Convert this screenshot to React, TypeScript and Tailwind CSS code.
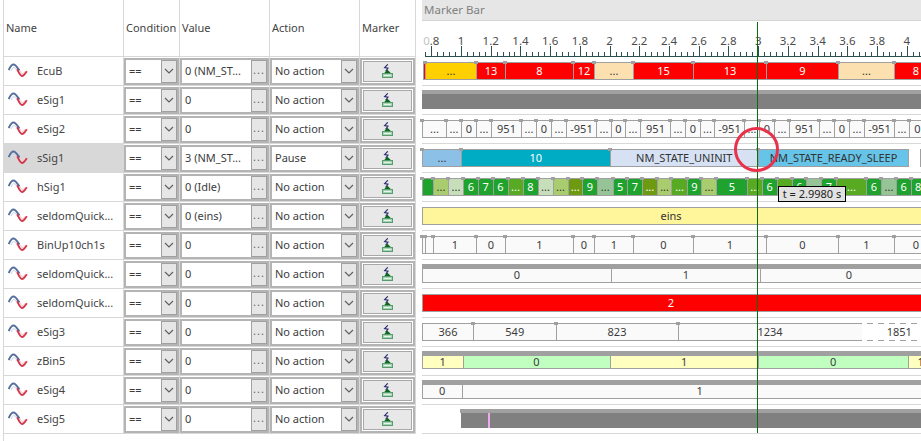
import React from "react";

type Seg = { to: number; t?: string; c?: string; h?: boolean; d?: boolean };

const G = "bg-[#1fa22e] text-white";
const A = "bg-[#a8cc6e] text-[#333]";
const B = "bg-[#c6dfba] text-[#333]";
const C = "bg-[#58aa22] text-white";
const D = "bg-[#6d9a10] text-white";
const E = "bg-[#96c496] text-[#333]";
const R = "bg-[#ff0000] text-white";
const W = "bg-[#fafafa] text-[#3c3c3c]";
const Y = "bg-[#ffffc0] text-[#3c3c3c]";
const L = "bg-[#c0ffc0] text-[#3c3c3c]";

const gen = (to: number, t?: string, c?: string): Seg => ({ to, t, c, h: true });

type RowDef = { start?: number; band?: boolean; top: string; height: string; segs: Seg[]; solid?: boolean };

const rows: RowDef[] = [
  {
    top: "mt-[5px]", height: "h-[18px]", start: 423,
    segs: [
      { to: 425, c: R }, gen(476, "...", "bg-[#ffd000] text-[#333]"), gen(505, "13", R), gen(573, "8", R), gen(594, "12", R),
      gen(633, "...", "bg-[#fde0b0] text-[#333]"), gen(693, "15", R), gen(766, "13", R), gen(838, "9", R),
      gen(894, "...", "bg-[#fde0b0] text-[#333]"), gen(925, "8", R + " pl-[12px]"),
    ],
  },
  { top: "mt-[4px]", height: "h-[19px]", solid: true, segs: [] },
  {
    top: "mt-[5px]", height: "h-[18px]",
    segs: [
      gen(446, "...", W), gen(461, "...", W), gen(476, "0", W), gen(491, "...", W), gen(521, "951", W), gen(536, "...", W),
      gen(551, "0", W), gen(566, "...", W), gen(596, "-951", W), gen(611, "...", W), gen(625, "0", W), gen(640, "...", W),
      gen(670, "951", W), gen(685, "...", W), gen(700, "0", W), gen(714, "...", W), gen(744, "-951", W), gen(759, "...", W),
      gen(774, "0", W), gen(789, "...", W), gen(819, "951", W), gen(834, "...", W), gen(849, "0", W), gen(864, "...", W),
      gen(894, "-951", W), gen(909, "...", W), gen(925, "0", W),
    ],
  },
  {
    top: "mt-[5px]", height: "h-[18px]",
    segs: [
      gen(461, "...", "bg-[#8cc0e6] text-[#333]"), gen(609.5, "10", "bg-[#00abc4] text-white"),
      gen(758, "NM_STATE_UNINIT", "bg-[#d6e2f3] text-[#333]"), gen(908, "NM_STATE_READY_SLEEP", "bg-[#66c4e8] text-[#333]"),
      { to: 920, c: "bg-white border-y-0 border-l-[#a0a0a0]" }, { to: 925, c: "bg-white" },
    ],
  },
  {
    top: "mt-[5px]", height: "h-[18px]",
    segs: [
      gen(433, "", G), gen(448, "...", A), gen(463, "...", B), gen(478, "6", G), gen(492.5, "7", G), gen(507.5, "6", G),
      gen(522.5, "...", C), gen(537.5, "8", G), gen(552.5, "...", B), gen(567.5, "...", A), gen(582, "...", D), gen(597, "9", G),
      gen(612.5, "...", E), gen(627, "5", G), gen(642, "7", G), gen(656.7, "...", D), gen(671.5, "...", A), gen(686.7, "...", C),
      gen(701, "9", G), gen(716, "...", A), gen(746.7, "5", G), gen(761.7, "...", C), gen(776.7, "6", G), gen(791.7, "", C),
      gen(806, "6", G), gen(821, "", E), gen(836, "7", G), gen(866, "...", C), gen(881, "6", G), gen(896, "...", E),
      gen(910.6, "6", G), gen(925, "8", G),
    ],
  },
  { top: "mt-[5px]", height: "h-[18px]", segs: [{ to: 925, t: "eins", c: "bg-[#fff59b] text-[#333] pr-[6px]" }] },
  {
    top: "mt-[5px]", height: "h-[18px]",
    segs: [
      gen(425, "", W), gen(433, "", W), gen(476, "1", W), gen(505, "0", W), gen(573, "1", W), gen(594, "0", W), gen(633, "1", W),
      gen(693, "0", W), gen(766, "1", W), gen(838, "0", W), gen(894, "1", W), gen(925, "0", W + " pl-[12px]"),
    ],
  },
  { band: true, top: "mt-[4px]", height: "h-[19px]", segs: [{ to: 611, t: "0", c: W }, { to: 760, t: "1", c: W }, { to: 925, t: "0", c: W + " pl-[12px]" }] },
  { top: "mt-[5px]", height: "h-[18px]", segs: [{ to: 925, t: "2", c: R + " pr-[6px]" }] },
  {
    top: "mt-[5px]", height: "h-[18px]",
    segs: [{ to: 473, t: "366", c: W }, gen(555.5, "549", W), gen(677.5, "823", W), gen(861.5, "1234", W), { to: 925, t: "1851", c: "bg-white text-[#3c3c3c] pl-[12px]", d: true }],
  },
  {
    band: true, top: "mt-[4px]", height: "h-[18px]",
    segs: [{ to: 462.5, t: "1", c: Y }, { to: 609.5, t: "0", c: L }, { to: 758, t: "1", c: Y }, { to: 907.5, t: "0", c: L }, { to: 925, t: "1", c: Y + " pl-[8px]" }],
  },
  { band: true, top: "mt-[4px]", height: "h-[19px]", segs: [{ to: 461.5, t: "0", c: W }, { to: 925, t: "1", c: W + " pl-[12px]" }] },
];

const signals = [
  { n: "EcuB", v: "0 (NM_ST...", a: "No action" },
  { n: "eSig1", v: "0", a: "No action" },
  { n: "eSig2", v: "0", a: "No action" },
  { n: "sSig1", v: "3 (NM_ST...", a: "Pause", sel: true },
  { n: "hSig1", v: "0 (Idle)", a: "No action" },
  { n: "seldomQuick...", v: "0 (eins)", a: "No action" },
  { n: "BinUp10ch1s", v: "0", a: "No action" },
  { n: "seldomQuick...", v: "0", a: "No action" },
  { n: "seldomQuick...", v: "0", a: "No action" },
  { n: "eSig3", v: "0", a: "No action" },
  { n: "zBin5", v: "0", a: "No action" },
  { n: "eSig4", v: "0", a: "No action" },
  { n: "eSig5", v: "0", a: "No action" },
];

const WaveIcon = () => (
  <svg width="20" height="16" viewBox="0 0 20 16" className="shrink-0" fill="none">
    <path d="M3 8 C4 6 5 4.5 6 4.5 C7.5 4.5 8.5 6.5 10 8.5" stroke="#d5dbe8" strokeWidth="1.2" />
    <path d="M12 8 C13 10 14 10.8 15 10.5 C16 10.2 16.5 9.5 17 8.5" stroke="#f3d0d4" strokeWidth="1.2" />
    <path d="M0.7 7 C2.5 3 4 1.5 5.5 1.5 C7.5 1.5 9 4 11.5 7.5" stroke="#55709f" strokeWidth="1.9" />
    <path d="M9.2 6.3 C10.7 9 12 13 14 13 C15.5 13 17 11 18.8 8.2" stroke="#d4364a" strokeWidth="1.9" />
  </svg>
);

const MarkerIcon = () => (
  <svg width="11" height="14" viewBox="0 0 11 14" fill="none">
    <path d="M5.8 0.3 L2.6 3.6 L6 4.2 L3.6 7.4" stroke="#2c2c70" strokeWidth="1.1" />
    <path d="M5.5 5.8 L9 9.2 L2 9.2 Z" fill="#0a6a1a" />
    <rect x="0.5" y="9.5" width="10" height="4" fill="#a4d4b0" stroke="#5a9a70" />
    <path d="M2 11.5 H9" stroke="#e4f4e8" />
  </svg>
);

const Chevron = () => (
  <svg width="10" height="6" viewBox="0 0 10 6" fill="none">
    <path d="M1 1 L5 5 L9 1" stroke="#606060" strokeWidth="1.2" />
  </svg>
);

const SideBtn = ({ children }: { children: React.ReactNode }) => (
  <div className="w-[16px] shrink-0 flex items-center justify-center bg-[#e6e6e6] border border-[#a0a0a0]">{children}</div>
);

const Box = ({ w, text, btn }: { w: string; text: string; btn: React.ReactNode }) => (
  <div className={`${w} shrink-0 flex h-[27px] bg-white border-2 border-[#b4b4b4] overflow-hidden`}>
    <div className="flex-1 min-w-0 flex items-center whitespace-nowrap pl-[3px]">{text}</div>
    <SideBtn>{btn}</SideBtn>
  </div>
);

const Head = ({ w, t }: { w: string; t: string }) => (
  <div className={`${w} shrink-0 flex items-center border-r border-[#d8d8d8] pl-[2px]`}>{t}</div>
);

const Segment = ({ s, from }: { s: Seg; from: number }) => (
  <div
    style={{ width: s.to - from }}
    className={`relative shrink-0 flex items-center justify-center whitespace-nowrap ${
      s.d ? "" : "border-y border-l border-[#a0a0a0]"
    } ${s.c ?? ""}`}
  >
    {s.t}
    {s.h && <span className="absolute top-[-2px] left-[-3px] w-[4px] h-[3px] bg-[#a0a0a0]" />}
    {s.d && (
      <>
        <span className="absolute top-0 left-[5px] right-0 h-[1px] bg-[repeating-linear-gradient(90deg,#a0a0a0_0_6px,transparent_6px_11px)]" />
        <span className="absolute bottom-0 left-[5px] right-0 h-[1px] bg-[repeating-linear-gradient(90deg,#a0a0a0_0_6px,transparent_6px_11px)]" />
      </>
    )}
  </div>
);

const SignalBar = ({ r }: { r: RowDef }) => {
  const start = r.start ?? 422;
  return (
    <div className="h-[29px] shrink-0 border-b border-[#d8d8d8]">
      {r.solid ? (
        <div className={`${r.top} ${r.height} bg-[#808080] border-t-4 border-[#a0a0a0]`} />
      ) : (
        <div className={`${r.top} ${r.height} flex flex-col`}>
          {r.band && <div className="h-[4px] shrink-0 bg-[#a0a0a0]" />}
          <div className={`flex-1 min-h-0 flex ${start > 422 ? "ml-[1px]" : ""}`}>
            {r.segs.map((s, i) => (
              <Segment key={i} s={s} from={i === 0 ? start : r.segs[i - 1].to} />
            ))}
          </div>
        </div>
      )}
    </div>
  );
};

const tx = (t: number) => 461 + (t - 1) * 148.6 - 422;

const labels = ["0.8", "1", "1.2", "1.4", "1.6", "1.8", "2", "2.2", "2.4", "2.6", "2.8", "3", "3.2", "3.4", "3.6", "3.8", "4"];

const Ruler = () => {
  const minor: number[] = [];
  for (let i = 0; i < 90; i++) minor.push(0.76 + i * 0.04);
  return (
    <div className="relative h-[36px] shrink-0">
      <svg width="499" height="36" className="absolute left-0 top-0" fill="none">
        <path d="M3 35.5 H499" stroke="#2a5050" />
        {minor.map((t, i) => {
          const major = i % 5 === 1;
          const x = Math.round(tx(t)) + 0.5;
          return <path key={i} d={`M${x} ${major ? 25 : 31} V35`} stroke="#2a5050" />;
        })}
      </svg>
      {labels.map((l) => (
        <span key={l} style={{ left: tx(parseFloat(l)) }} className="absolute top-[12px] -translate-x-1/2 leading-[16px] text-[11.5px] text-[#4c4c4c]">
          {l === "0.8" ? (
            <>
              <span className="text-[#c4c4c4]">0</span>.8
            </>
          ) : (
            l
          )}
        </span>
      ))}
    </div>
  );
};

export default function App() {
  return (
    <div className="relative w-[921px] h-[441px] overflow-hidden bg-white flex text-[11px] text-[#3c3c3c] font-['Noto_Sans',sans-serif]">
      <div className="ml-[3px] w-[413px] shrink-0 flex flex-col border-l border-[#d8d8d8]">
        <div className="h-[57px] shrink-0 flex border-b border-[#d8d8d8] text-[#444]">
          <Head w="w-[120px]" t="Name" />
          <Head w="w-[56px]" t="Condition" />
          <Head w="w-[90px]" t="Value" />
          <Head w="w-[90px]" t="Action" />
          <Head w="w-[56px]" t="Marker" />
        </div>
        {signals.map((s, i) => (
          <div key={i} className="h-[29px] shrink-0 flex border-b border-[#d8d8d8]">
            <div className={`w-[120px] shrink-0 flex items-center pl-[4px] gap-[9px] border-r border-[#d8d8d8] whitespace-nowrap text-[#444] ${s.sel ? "bg-[#d8d8d8]" : ""}`}>
              <WaveIcon />
              <span>{s.n}</span>
            </div>
            <div className="w-[56px] shrink-0 flex items-center border-r border-[#d8d8d8]">
              <Box w="w-[55px]" text="==" btn={<Chevron />} />
            </div>
            <div className="w-[90px] shrink-0 flex items-center border-r border-[#d8d8d8]">
              <Box w="w-[89px]" text={s.v} btn={<span className="leading-none tracking-[1px] text-[#666] mt-[-4px]">...</span>} />
            </div>
            <div className="w-[90px] shrink-0 flex items-center border-r border-[#d8d8d8]">
              <Box w="w-[89px]" text={s.a} btn={<Chevron />} />
            </div>
            <div className="w-[56px] shrink-0 flex items-center border-r border-[#d8d8d8]">
              <div className="w-[55px] h-[27px] flex bg-white border-2 border-[#b4b4b4] p-[1px]">
                <div className="flex-1 flex items-center justify-center bg-[#e8e8e8] border border-[#a8a8a8]">
                  <MarkerIcon />
                </div>
              </div>
            </div>
          </div>
        ))}
      </div>

      <div className="ml-[6px] w-[499px] shrink-0 flex flex-col">
        <div className="h-[21px] shrink-0 flex items-center pl-[2px] bg-[#e6e6e6] border-b border-[#d4d4d4] text-[11.5px] text-[#808080]">Marker Bar</div>
        <Ruler />
        {rows.map((r, i) => (
          <SignalBar key={i} r={r} />
        ))}
        <div className="h-[29px] shrink-0 border-b border-[#d8d8d8] pt-[4px] pl-[38px] flex flex-col">
          <div className="h-[4px] shrink-0 bg-[#a0a0a0]" />
          <div className="h-[15px] shrink-0 bg-[#808080] ml-[1px] pl-[27px]">
            <div className="w-[2px] h-full bg-[#eeaaee]" />
          </div>
        </div>
      </div>

      <div className="absolute left-[757px] top-[22px] w-[1px] h-[411px] bg-[#0f6b0f]" />
      <svg className="absolute left-[734px] top-[127px]" width="46" height="46" fill="none">
        <circle cx="22.5" cy="22.5" r="21" stroke="#e8324c" strokeWidth="3" />
      </svg>
      <div className="absolute left-[778px] top-[186px] w-[68px] h-[16px] flex items-center justify-center whitespace-nowrap bg-[#e2e2e2] border border-black text-[#222]">
        t = 2.9980 s
      </div>
    </div>
  );
}
